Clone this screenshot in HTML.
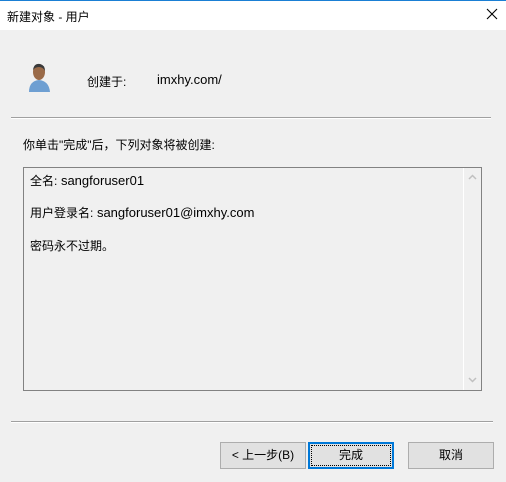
<html><head><style>
body{margin:0;width:506px;height:482px;background:#f0f0f0;font-family:"Liberation Sans","Noto Sans CJK SC",sans-serif;font-size:13px;color:#000;position:relative;overflow:hidden}
.a{position:absolute}
.c{font-size:12px}
.btn{position:absolute;top:442px;height:27px;box-sizing:border-box;border:1px solid #adadad;background:#e1e1e1;text-align:center;line-height:25px;font-size:12px}
</style></head><body>
<div class="a" style="left:0;top:0;width:506px;height:30px;background:#fff;border-top:1px solid #1a7fd4;box-sizing:border-box"></div>
<div class="a c" style="left:7px;top:8px">新建对象 - 用户</div>
<svg class="a" style="left:486px;top:8px" width="12" height="12"><path d="M1 1L11 11M11 1L1 11" stroke="#000" stroke-width="1.1"/></svg>
<svg class="a" style="left:26px;top:61px" width="26" height="32">
<path d="M3 31 Q3 20 13 19 Q23 20 24 31Z" fill="#6e9fd2"/>
<ellipse cx="13" cy="11" rx="6" ry="8" fill="#9a6a48"/>
<path d="M7 9 Q8 2 14 3 Q19 4 19 10 Q17 6 13 6 Q9 6 7 9Z" fill="#3a3a3a"/>
</svg>
<div class="a c" style="left:87px;top:73px">创建于:</div>
<div class="a" style="left:157px;top:72px">imxhy.com/</div>
<div class="a" style="left:11px;top:117px;width:480px;height:1px;background:#a0a0a0"></div>
<div class="a" style="left:11px;top:118px;width:480px;height:1px;background:#fff"></div>
<div class="a c" style="left:23px;top:136px">你单击"完成"后，下列对象将被创建:</div>
<div class="a" style="left:23px;top:167px;width:459px;height:224px;border:1px solid #828282;box-sizing:border-box"></div>
<div class="a" style="left:463px;top:168px;width:1px;height:222px;background:#fff"></div>
<svg class="a" style="left:468px;top:174px" width="9" height="6"><path d="M1 5L4.5 1.5L8 5" stroke="#c0c0c0" stroke-width="1.5" fill="none"/></svg>
<svg class="a" style="left:468px;top:377px" width="9" height="6"><path d="M1 1L4.5 4.5L8 1" stroke="#c0c0c0" stroke-width="1.5" fill="none"/></svg>
<div class="a" style="left:30px;top:172px"><span class="c">全名:</span> sangforuser01</div>
<div class="a" style="left:30px;top:204px"><span class="c">用户登录名:</span> sangforuser01@imxhy.com</div>
<div class="a c" style="left:30px;top:237px">密码永不过期。</div>
<div class="a" style="left:11px;top:421px;width:482px;height:1px;background:#a0a0a0"></div>
<div class="a" style="left:11px;top:422px;width:482px;height:1px;background:#fff"></div>
<div class="btn" style="left:220px;width:86px">&lt; 上一步(B)</div>
<div class="btn" style="left:308px;width:86px;border:2px solid #0078d7;line-height:23px"><span style="display:block;margin:1px;border:1px dotted #000;height:19px;line-height:19px">完成</span></div>
<div class="btn" style="left:408px;width:86px">取消</div>
</body></html>
